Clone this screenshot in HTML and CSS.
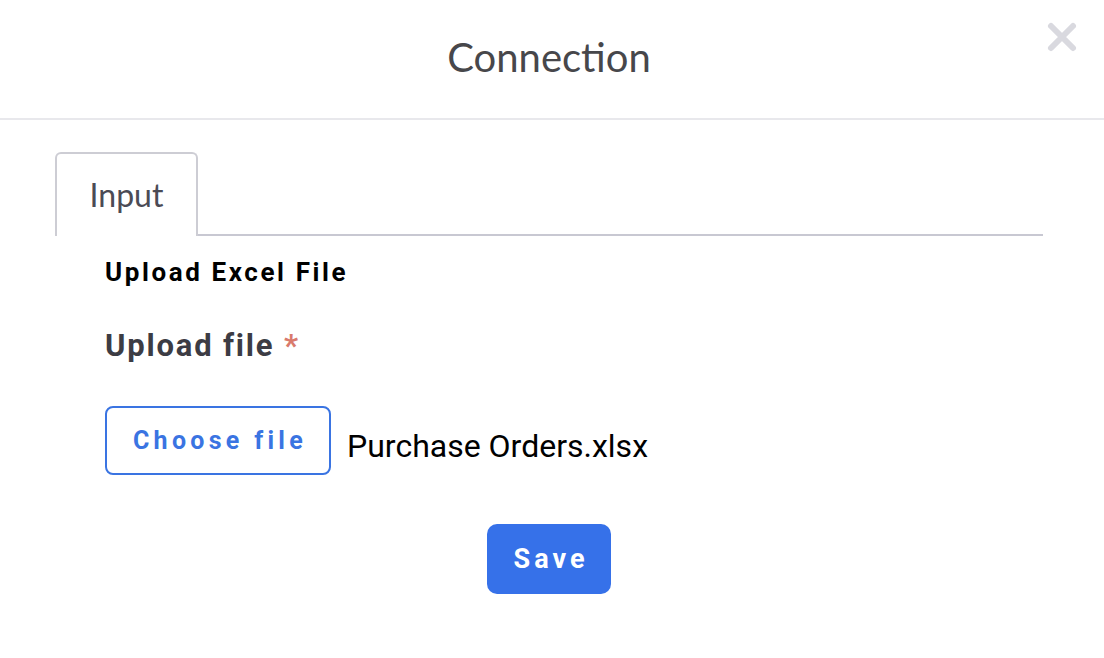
FILE: index.html
```html
<!DOCTYPE html>
<html>
<head>
<meta charset="utf-8">
<link rel="stylesheet" href="styles.css">
</head>
<body>
<div class="modal">
  <header class="modal-header">
    <h1 class="title">Connection</h1>
    <button class="close" aria-label="Close">
      <svg width="32" height="32" viewBox="0 0 32 32"><path d="M5 5 L27 27 M27 5 L5 27" stroke="#d9d9df" stroke-width="6" stroke-linecap="round"/></svg>
    </button>
  </header>
  <div class="body">
    <div class="tabs">
      <div class="tab">Input</div>
      <div class="tab-fill"></div>
    </div>
    <div class="content">
      <div class="section-title">Upload Excel File</div>
      <div class="field-label">Upload file <span class="req">*</span></div>
      <div class="file-row">
        <button class="choose">Choose file</button>
        <span class="file-name">Purchase Orders.xlsx</span>
      </div>
      <div class="actions">
        <button class="save">Save</button>
      </div>
    </div>
  </div>
</div>
</body>
</html>
```
FILE: styles.css
```css
* { box-sizing: border-box; }
html, body { margin: 0; padding: 0; background: #fff; }
body { width: 1104px; height: 658px; overflow: hidden; font-family: Roboto, "Liberation Sans", sans-serif; }
.modal { width: 1104px; }
.modal-header {
  height: 120px;
  border-bottom: 2px solid #e8e8ec;
  display: flex;
  align-items: center;
  justify-content: center;
  position: relative;
  padding-right: 6px;
}
.title {
  margin: 0;
  margin-top: -4px;
  font-family: Lato, "Open Sans", sans-serif;
  font-weight: 400;
  font-size: 40px;
  color: #47474b;
  letter-spacing: 0;
}
.close {
  position: absolute;
  right: 26px;
  top: 21px;
  border: 0;
  background: none;
  padding: 0;
  width: 32px;
  height: 32px;
}
.close svg { display: block; }
.body { padding: 32px 61px 0 55px; }
.tabs { display: flex; align-items: flex-end; height: 84px; }
.tab {
  width: 143px;
  height: 84px;
  border: 2px solid #cdcdd4;
  border-bottom: 0;
  border-radius: 6px 6px 0 0;
  display: flex;
  align-items: center;
  justify-content: center;
  font-family: Lato, "Open Sans", sans-serif;
  font-size: 32px;
  color: #4b4b55;
  padding-bottom: 2px;
}
.tab-fill { flex: 1; border-bottom: 2px solid #c8c8d2; }
.content { padding: 20px 0 0 50px; }
.section-title {
  font-weight: 700;
  font-size: 26px;
  letter-spacing: 2.6px;
  color: #000;
  line-height: 32px;
}
.field-label {
  margin-top: 40px;
  font-weight: 700;
  font-size: 31px;
  letter-spacing: 1.8px;
  color: #3c3c44;
  line-height: 36px;
}
.req { color: #d97a6c; }
.file-row { display: flex; align-items: center; margin-top: 42px; gap: 16px; }
.choose {
  width: 226px;
  height: 69px;
  border: 2px solid #3a74e2;
  border-radius: 8px;
  background: #fff;
  color: #3a74e2;
  font-family: Roboto, sans-serif;
  font-weight: 700;
  font-size: 25px;
  letter-spacing: 4.3px;
  padding: 0 0 0 4px;
}
.file-name { font-size: 32px; color: #000; margin-top: 11px; }
.actions { display: flex; justify-content: center; margin-top: 49px; margin-left: -50px; }
.save {
  width: 124px;
  height: 70px;
  border: 0;
  border-radius: 10px;
  background: #3671e9;
  color: #fff;
  font-family: Roboto, sans-serif;
  font-weight: 700;
  font-size: 27px;
  letter-spacing: 4px;
  padding: 0 0 0 4px;
}
```
